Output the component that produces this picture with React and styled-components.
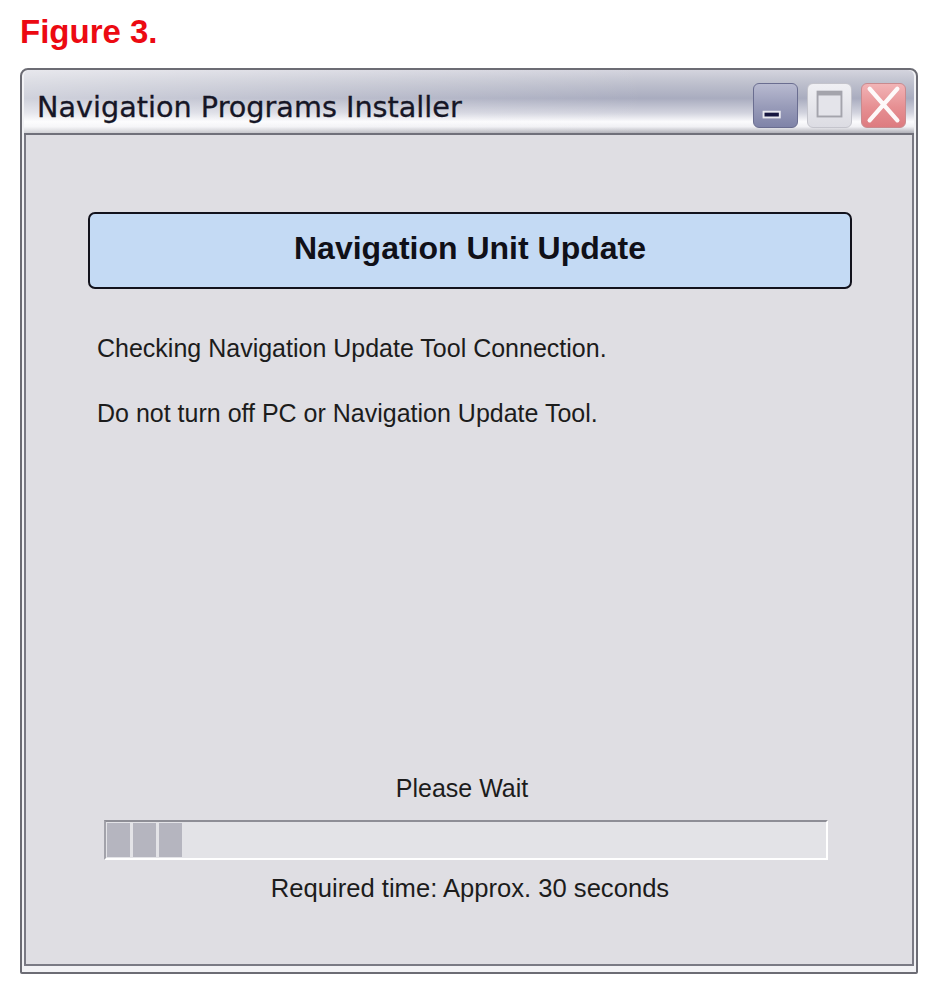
import React from "react";
import styled, { createGlobalStyle } from "styled-components";

const GlobalStyle = createGlobalStyle`
  body {
    margin: 0;
    background: #ffffff;
    font-family: "Liberation Sans", Arial, sans-serif;
  }
`;

const Page = styled.div`
  width: 941px;
  height: 988px;
  box-sizing: border-box;
  padding: 16px 0 0 20px;
`;

const FigureLabel = styled.h1`
  margin: 0;
  font-size: 33px;
  line-height: 32px;
  font-weight: bold;
  color: #ec0a12;
`;

const Window = styled.div`
  margin-top: 20px;
  width: 898px;
  height: 906px;
  box-sizing: border-box;
  display: flex;
  flex-direction: column;
  padding: 0 2px 6px 2px;
  border: 2px solid #6c6c74;
  border-radius: 8px 8px 2px 2px;
  background: #f2f2f5;
`;

const TitleBar = styled.div`
  height: 65px;
  box-sizing: border-box;
  display: flex;
  align-items: flex-start;
  padding: 0 8px 0 13px;
  border-bottom: 2px solid #70707a;
  border-radius: 6px 6px 0 0;
  background:
    linear-gradient(90deg, rgba(255, 255, 255, 0.45) 0%, rgba(255, 255, 255, 0.15) 45%, rgba(255, 255, 255, 0) 70%),
    linear-gradient(180deg, #d4d4de 0%, #bfc1ce 20%, #a9acbf 45%, #d2d3de 68%, #fbfbfd 82%, #f0f0f4 90%, #b0b0b8 100%);
`;

const Title = styled.div`
  margin-top: 23px;
  flex: 1;
  font-family: "DejaVu Sans", Verdana, sans-serif;
  font-size: 28.7px;
  line-height: 28px;
  color: #161626;
  -webkit-text-stroke: 0.3px #161626;
`;

const Controls = styled.div`
  margin-top: 13px;
  display: flex;
  gap: 9px;
`;

const CtrlButton = styled.div`
  width: 45px;
  height: 45px;
  box-sizing: border-box;
  border-radius: 6px;
  display: flex;
  align-items: center;
  justify-content: center;
  border: 1px solid ${(p) => p.$border};
  background: ${(p) => p.$bg};
`;

const Client = styled.div`
  flex: 1;
  display: flex;
  flex-direction: column;
  background: #dfdee3;
  border: 2px solid #7a7a84;
  border-top: none;
`;

const Banner = styled.div`
  margin: 77px 60px 0 62px;
  height: 77px;
  box-sizing: border-box;
  display: flex;
  align-items: center;
  justify-content: center;
  padding-bottom: 4px;
  background: #c4daf4;
  border: 2px solid #12121c;
  border-radius: 7px;
  font-size: 32px;
  font-weight: bold;
  color: #101018;
`;

const Messages = styled.div`
  margin-top: 47px;
  padding-left: 71px;
  display: flex;
  flex-direction: column;
  gap: 40px;
`;

const Line = styled.div`
  font-size: 25px;
  line-height: 25px;
  color: #1c1c1c;
`;

const Footer = styled.div`
  margin-top: auto;
  padding: 0 84px 63px 78px;
  display: flex;
  flex-direction: column;
  align-items: stretch;
`;

const Caption = styled.div`
  font-size: ${(p) => p.$size || 25}px;
  line-height: 25px;
  text-align: center;
  color: #1c1c1c;
  margin-bottom: ${(p) => p.$gap || 0}px;
  padding-left: ${(p) => Math.max(p.$shift || 0, 0) * 2}px;
  padding-right: ${(p) => Math.max(-(p.$shift || 0), 0) * 2}px;
`;

const Progress = styled.div`
  height: 40px;
  box-sizing: border-box;
  display: flex;
  gap: 3px;
  padding: 1px 1px;
  margin-bottom: 16px;
  background: #e3e3e7;
  border-top: 2px solid #8e8e96;
  border-left: 2px solid #a2a2aa;
  border-right: 2px solid #ffffff;
  border-bottom: 2px solid #ffffff;
`;

const Block = styled.div`
  width: 23px;
  height: 34px;
  background: #b5b5bf;
`;

const MinIcon = () => (
  <svg width="45" height="45" viewBox="0 0 45 45">
    <rect x="9" y="28" width="19" height="8" fill="#ffffff" opacity="0.8" />
    <rect x="11" y="30" width="15" height="4" fill="#161640" />
  </svg>
);

const MaxIcon = () => (
  <svg width="45" height="45" viewBox="0 0 45 45">
    <rect x="10" y="8" width="25" height="26" fill="#e4e4ea" stroke="#a4a4ac" strokeWidth="2" />
    <rect x="10" y="8" width="25" height="4" fill="#a4a4ac" />
  </svg>
);

const CloseIcon = () => (
  <svg width="45" height="45" viewBox="0 0 45 45">
    <path d="M8 5 L37 38 M37 5 L8 38" stroke="#ffffff" strokeWidth="4.5" strokeLinecap="round" opacity="0.95" />
  </svg>
);

export default function App() {
  return (
    <Page>
      <GlobalStyle />
      <FigureLabel>Figure 3.</FigureLabel>
      <Window>
        <TitleBar>
          <Title>Navigation Programs Installer</Title>
          <Controls>
            <CtrlButton $bg="linear-gradient(180deg, #b8bad0 0%, #9a9dba 50%, #7f83a8 100%)" $border="#6a6d90">
              <MinIcon />
            </CtrlButton>
            <CtrlButton $bg="linear-gradient(180deg, #f0f0f4 0%, #dcdce3 100%)" $border="#c4c4cc">
              <MaxIcon />
            </CtrlButton>
            <CtrlButton $bg="linear-gradient(180deg, #f2b4b6 0%, #e68f92 55%, #dd7b80 100%)" $border="#c98a8e">
              <CloseIcon />
            </CtrlButton>
          </Controls>
        </TitleBar>
        <Client>
          <Banner>Navigation Unit Update</Banner>
          <Messages>
            <Line>Checking Navigation Update Tool Connection.</Line>
            <Line>Do not turn off PC or Navigation Update Tool.</Line>
          </Messages>
          <Footer>
            <Caption $gap={19} $shift={-4}>Please Wait</Caption>
            <Progress>
              <Block />
              <Block />
              <Block />
            </Progress>
            <Caption $size={25.6} $shift={4}>Required time: Approx. 30 seconds</Caption>
          </Footer>
        </Client>
      </Window>
    </Page>
  );
}
